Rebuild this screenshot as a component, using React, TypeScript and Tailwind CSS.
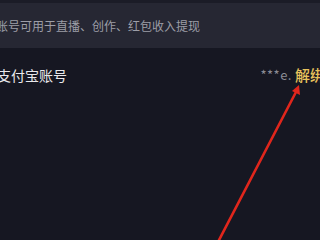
import React from "react";

export default function App() {
  return (
    <div
      className="relative w-[320px] h-[240px] overflow-hidden bg-[#161722]"
      style={{ fontFamily: '"Noto Sans CJK SC", "Noto Sans", sans-serif' }}
    >
      <div className="h-[3px] bg-[#1b1c27]" />
      <div className="h-[45px] bg-[#262733] flex items-center">
        <p className="ml-[-4px] text-[12px] text-[#9d9ea7] whitespace-nowrap">
          账号可用于直播、创作、红包收入提现
        </p>
      </div>

      <div className="flex items-center justify-between h-[54px]">
        <p className="ml-[-3px] text-[14px] text-[#e9e9ec] whitespace-nowrap">
          支付宝账号
        </p>
        <div className="flex items-center mr-[-5px] whitespace-nowrap">
          <span className="text-[13px] tracking-[0.5px] text-[#8b8c95]">***e.</span>
          <span className="ml-[3px] text-[15px] font-medium text-[#e8c25c]">
            解绑
          </span>
        </div>
      </div>

      <svg
        className="absolute left-0 top-0 pointer-events-none"
        width="320"
        height="240"
        viewBox="0 0 320 240"
      >
        <line
          x1="218"
          y1="242"
          x2="296"
          y2="92"
          stroke="#e0261c"
          strokeWidth="2.6"
          strokeLinecap="round"
        />
        <polygon points="299,85 300,95 292,91" fill="#e0261c" />
      </svg>
    </div>
  );
}
